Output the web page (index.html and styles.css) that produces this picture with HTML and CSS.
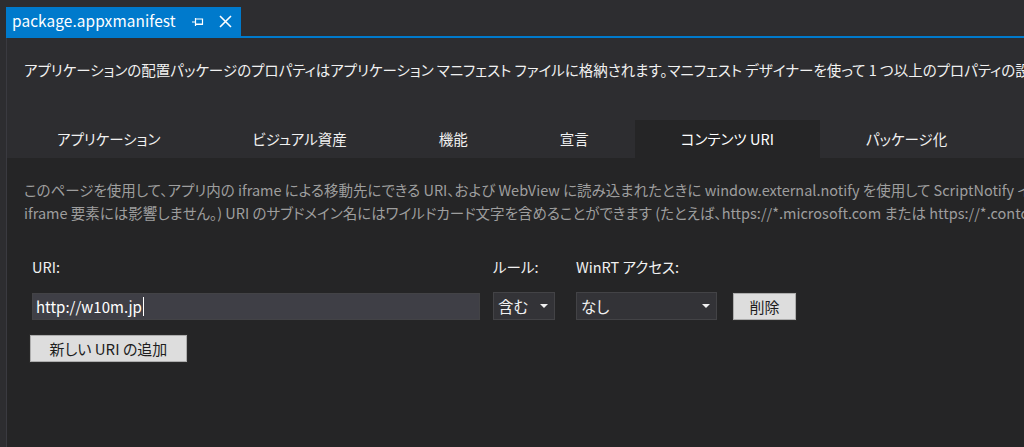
FILE: index.html
```html
<!DOCTYPE html>
<html lang="ja">
<head>
<meta charset="utf-8">
<title>package.appxmanifest</title>
<link rel="stylesheet" href="styles.css">
</head>
<body>
<div class="window">
  <div class="titlebar">
    <div class="doc-tab">
      <span class="doc-name">package.appxmanifest</span>
      <svg class="pin" width="12" height="10" viewBox="0 0 12 10"><path d="M0 5H3M3.5 1V9M4 2H10.5V7H4M4 7.5H11" fill="none" stroke="#fff" stroke-width="1.2"/></svg>
      <svg class="close" width="13" height="13" viewBox="0 0 13 13"><path d="M1 1L12 12M12 1L1 12" stroke="#fff" stroke-width="1.6"/></svg>
    </div>
  </div>
  <div class="frame">
    <div class="header">
      <p class="intro">アプリケーションの配置パッケージのプロパティはアプリケーション マニフェスト ファイルに格納されます。マニフェスト デザイナーを使って 1 つ以上のプロパティの設定または変更を行います。</p>
      <div class="tabs">
        <div class="tab">アプリケーション</div>
        <div class="tab">ビジュアル資産</div>
        <div class="tab">機能</div>
        <div class="tab">宣言</div>
        <div class="tab active">コンテンツ URI</div>
        <div class="tab">パッケージ化</div>
      </div>
    </div>
    <div class="content">
      <p class="help">このページを使用して、アプリ内の iframe による移動先にできる URI、および WebView に読み込まれたときに window.external.notify を使用して ScriptNotify イベントを発生できる URI を指定します。(この設定は、<br>iframe 要素には影響しません。) URI のサブドメイン名にはワイルドカード文字を含めることができます (たとえば、https://*.microsoft.com または https://*.contoso.com)。</p>
      <div class="uri-grid">
        <div class="label">URI:</div>
        <div class="label col2">ルール:</div>
        <div class="label col3">WinRT アクセス:</div>
        <div></div>
        <div class="input"><span>http://w10m.jp</span><span class="caret"></span></div>
        <div class="select rule col2"><span>含む</span><span class="arrow"></span></div>
        <div class="select access col3"><span>なし</span><span class="arrow"></span></div>
        <div class="btn del">削除</div>
      </div>
      <div class="btn add">新しい URI の追加</div>
    </div>
  </div>
</div>
</body>
</html>
```
FILE: styles.css
```css
html, body {
  margin: 0;
  padding: 0;
  background: #2d2d30;
}
body {
  width: 1024px;
  height: 447px;
  overflow: hidden;
  font-family: "Noto Sans CJK JP", "Noto Sans", sans-serif;
  font-feature-settings: "palt";
  color: #f1f1f1;
}
.window {
  height: 447px;
  display: flex;
  flex-direction: column;
}
.titlebar {
  height: 36px;
  margin-left: 6px;
  border-bottom: 2px solid #007acc;
  display: flex;
  align-items: flex-end;
  flex: none;
}
.doc-tab {
  height: 29px;
  width: 235px;
  box-sizing: border-box;
  background: #007acc;
  display: flex;
  align-items: center;
  padding-left: 6px;
  color: #fff;
}
.doc-name {
  font-size: 15.4px;
  letter-spacing: 0.1px;
  line-height: 1;
  padding-bottom: 2px;
}
.pin {
  margin-left: 16px;
  margin-top: 1px;
}
.close {
  margin-left: 15px;
}
.frame {
  flex: 1;
  margin-left: 6px;
  border-left: 1px solid #3a3a40;
  display: flex;
  flex-direction: column;
  min-height: 0;
}
.header {
  background: #2d2d30;
  flex: none;
}
.intro {
  margin: 0;
  padding: 21px 0 0 17px;
  height: 82px;
  box-sizing: border-box;
  font-size: 14.5px;
  line-height: 22px;
  white-space: nowrap;
  overflow: hidden;
  color: #f1f1f1;
}
.tabs {
  display: flex;
  height: 38px;
  padding-left: 4px;
}
.tab {
  padding: 0 46px;
  font-size: 14.5px;
  line-height: 38px;
  color: #f1f1f1;
  white-space: nowrap;
}
.tab.active {
  background: #252526;
  color: #fff;
}
.content {
  flex: 1;
  background: #252526;
  padding: 20px 0 0 17px;
}
.help {
  margin: 0;
  font-size: 14.5px;
  line-height: 23px;
  color: #9e9e9e;
  white-space: nowrap;
  overflow: hidden;
}
.uri-grid {
  display: grid;
  grid-template-columns: 448px 75px 162px 79px;
  margin-top: 33px;
  margin-left: 8px;
  align-items: center;
}
.label {
  font-size: 14.5px;
  line-height: 20px;
  color: #f1f1f1;
  margin-bottom: 15px;
  white-space: nowrap;
}
.col2 { margin-left: 13px; }
.col3 { margin-left: 21px; }
.input {
  height: 27px;
  width: 448px;
  box-sizing: border-box;
  background: #3f3f46;
  border: 1px solid #434346;
  display: flex;
  align-items: center;
  padding-left: 3px;
  font-size: 15px;
  color: #fff;
}
.caret {
  width: 1px;
  height: 19px;
  background: #fff;
  margin-left: 1px;
}
.select {
  height: 28px;
  box-sizing: border-box;
  background: #333337;
  border: 1px solid #434346;
  display: flex;
  align-items: center;
  justify-content: space-between;
  padding: 0 6px 0 4px;
  font-size: 15.5px;
  color: #f1f1f1;
}
.rule { width: 62px; }
.access { width: 141px; }
.arrow {
  width: 0;
  height: 0;
  border-left: 4px solid transparent;
  border-right: 4px solid transparent;
  border-top: 4px solid #f1f1f1;
}
.btn {
  background: #dddddd;
  border: 1px solid #adadad;
  outline: 1px solid #2a2a2a;
  color: #1e1e1e;
  font-size: 15px;
  line-height: 25px;
  height: 27px;
  box-sizing: border-box;
  text-align: center;
}
.del {
  width: 63px;
  margin-left: 16px;
}
.add {
  width: 157px;
  margin-top: 15px;
  margin-left: 6px;
}
```
